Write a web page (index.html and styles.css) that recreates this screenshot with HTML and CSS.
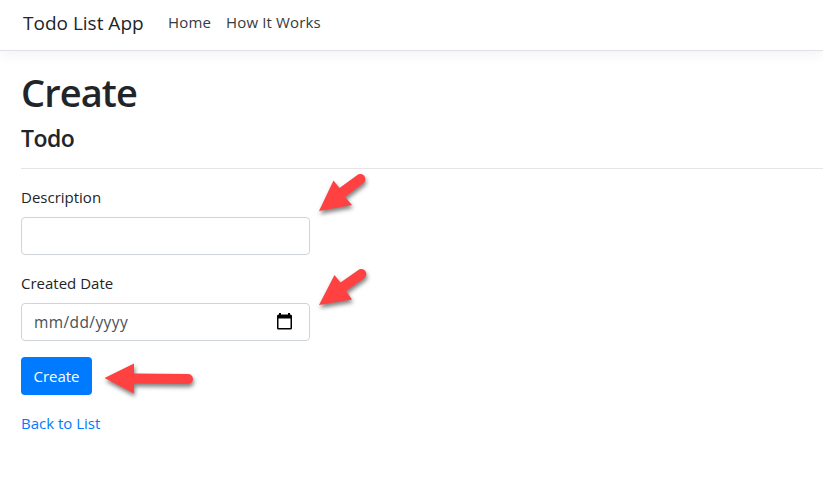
FILE: index.html
```html
<!DOCTYPE html>
<html lang="en">
<head>
<meta charset="utf-8">
<title>Create - Todo List App</title>
<link rel="stylesheet" href="styles.css">
</head>
<body>
<header class="navbar">
  <a class="brand" href="#">Todo List App</a>
  <nav class="links">
    <a class="home" href="#">Home</a>
    <a class="how" href="#">How It Works</a>
  </nav>
</header>
<main class="content">
  <h1>Create</h1>
  <h4>Todo</h4>
  <hr>
  <form>
    <div class="group">
      <label for="description">Description</label>
      <input class="control" id="description" type="text">
    </div>
    <div class="group">
      <label>Created Date</label>
      <div class="control date">
        <span class="placeholder">mm/dd/yyyy</span>
        <svg class="calendar" width="17" height="17" viewBox="0 0 17 17"><path fill="#000" fill-rule="evenodd" d="M3 0h2v1.5h7V0h2v1.5h.5q1.5 0 1.5 1.5v12q0 1.5-1.5 1.5h-12Q1 16.500 1 15V3q0-1.500 1.500-1.500H3zM2.500 5.500V15h12V5.500z"/></svg>
      </div>
    </div>
    <button class="submit" type="button">Create</button>
  </form>
  <a class="back" href="#">Back to List</a>
</main>
<svg class="arrows" width="823" height="496" viewBox="0 0 823 496">
  <g fill="#ff4141">
    <path d="M319 211L333.500 180.500L339.500 188L357 175.200A5 5 0 0 1 363.500 183L345 197L352 205Z"/>
    <path d="M319 305L334.500 275L340.500 282.500L358 270.200A5 5 0 0 1 364.500 278L346 291L352 299.500Z"/>
    <path d="M104.500 378L134 363.500V373.500L188 374A5 5 0 0 1 188 384L134 383.500V393.500Z"/>
  </g>
</svg>
</body>
</html>
```
FILE: styles.css
```css
* { box-sizing: border-box; }
body {
  margin: 0;
  height: 496px;
  overflow: hidden;
  position: relative;
  background: #fff;
  color: #212529;
  font: 400 15px/24px "Open Sans", "Noto Sans", sans-serif;
}
a { text-decoration: none; }
.navbar {
  display: flex;
  align-items: center;
  height: 51px;
  padding: 0 0 5px 23px;
  border-bottom: 1px solid #dee2e6;
  box-shadow: 0 4px 12px rgba(0, 0, 0, .05);
}
.navbar a { color: #212529; white-space: nowrap; }
.brand { width: 145px; font-size: 19px; line-height: 30px; }
.links { display: flex; padding-bottom: 2px; letter-spacing: .15px; }
.navbar .links a { color: #343a40; }
.home { width: 58px; }
.content { padding: 17px 0 0 21px; }
h1, h4 { margin: 0 0 8px; font-weight: 600; }
h1 { font-size: 38px; line-height: 48px; letter-spacing: -.9px; }
h4 { font-size: 23px; line-height: 29px; letter-spacing: -.5px; }
hr { margin: 15px 0 16px; border: 0; border-top: 1px solid #e5e5e5; }
.group { width: 289px; margin-bottom: 16px; }
label { display: block; margin-bottom: 8px; }
.control {
  display: flex;
  align-items: center;
  width: 100%;
  height: 38px;
  padding: 0 12px;
  border: 1px solid #ced4da;
  border-radius: 4px;
  background: #fff;
  font: inherit;
}
.date { justify-content: space-between; padding-right: 16px; }
.placeholder { color: #495057; font-size: 15.500px; letter-spacing: .4px; }
.calendar { display: block; margin-bottom: 1px; }
.submit {
  display: block;
  width: 71px;
  height: 38px;
  margin-bottom: 16px;
  padding: 0;
  border: 0;
  border-radius: 4px;
  background: #007bff;
  color: #fff;
  font: inherit;
}
.back { color: #007bff; }
.arrows {
  position: absolute;
  inset: 0;
  pointer-events: none;
  filter: drop-shadow(1px 3px 2px rgba(0, 0, 0, .5));
}
```
